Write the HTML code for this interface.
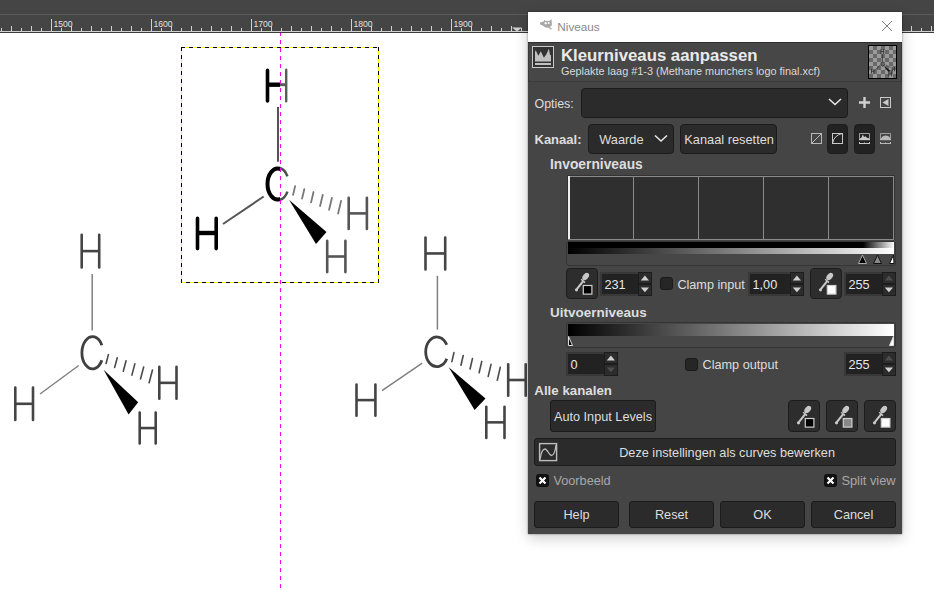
<!DOCTYPE html><html><head><meta charset="utf-8"><style>body{margin:0;width:934px;height:591px;overflow:hidden;position:relative;background:#fff}</style></head><body>
<svg width="934" height="558" viewBox="0 33 934 558" style="position:absolute;left:0;top:33px"><defs><filter id="bl" x="-10%" y="-10%" width="120%" height="120%"><feGaussianBlur stdDeviation="0.75"/></filter><clipPath id="lft"><rect x="0" y="0" width="280" height="600"/></clipPath><clipPath id="rgt"><rect x="280" y="0" width="700" height="600"/></clipPath></defs><rect x="0" y="33" width="934" height="558" fill="#fff"/><g filter="url(#bl)"><path d="M81.7 234.8 V267.4 M99.2 234.8 V267.4" stroke="#444" stroke-width="2.6" stroke-linecap="round" fill="none"/><path d="M81.7 251.1 H99.2" stroke="#444" stroke-width="2.6" fill="none"/><path d="M92.2 274 L92.2 330.5" stroke="#808080" stroke-width="1.5" fill="none"/><path d="M101.86 345.17 A10.60 16.15 0 1 0 101.86 360.33" stroke="#404040" stroke-width="2.8" stroke-linecap="butt" fill="none"/><path d="M15.3 387.6 V420.0 M33.0 387.6 V420.0" stroke="#444" stroke-width="2.6" stroke-linecap="round" fill="none"/><path d="M15.3 403.8 H33.0" stroke="#444" stroke-width="2.6" fill="none"/><path d="M40 394 L78.7 365.5" stroke="#808080" stroke-width="1.5" fill="none"/><path d="M108.42 354.65 L106.08 363.55 M117.24 357.73 L114.68 367.39 M126.05 360.80 L123.29 371.24 M134.86 363.87 L131.90 375.09 M143.67 366.95 L140.51 378.93 M152.48 370.02 L149.12 382.78" stroke="#4a4a4a" stroke-width="1.6" stroke-linecap="round" fill="none"/><path d="M103.6 369.7 L138.2 402.2 L128.6 414.4 Z" fill="#000"/><path d="M159.3 366.90000000000003 V398.8 M176.5 366.90000000000003 V398.8" stroke="#444" stroke-width="2.6" stroke-linecap="round" fill="none"/><path d="M159.3 382.85 H176.5" stroke="#444" stroke-width="2.6" fill="none"/><path d="M139.70000000000002 412.6 V443.5 M155.7 412.6 V443.5" stroke="#444" stroke-width="2.6" stroke-linecap="round" fill="none"/><path d="M139.70000000000002 428.05 H155.7" stroke="#444" stroke-width="2.6" fill="none"/></g><g filter="url(#bl)"><path d="M425.5 237.5 V269.4 M445.2 237.5 V269.4" stroke="#444" stroke-width="2.6" stroke-linecap="round" fill="none"/><path d="M425.5 253.45 H445.2" stroke="#444" stroke-width="2.6" fill="none"/><path d="M437.4 275.8 L437.4 329.6" stroke="#808080" stroke-width="1.5" fill="none"/><path d="M446.79 344.85 A11.20 14.80 0 1 0 446.79 358.75" stroke="#404040" stroke-width="2.8" stroke-linecap="butt" fill="none"/><path d="M356.5 384.5 V415.7 M375.4 384.5 V415.7" stroke="#444" stroke-width="2.6" stroke-linecap="round" fill="none"/><path d="M356.5 400.1 H375.4" stroke="#444" stroke-width="2.6" fill="none"/><path d="M382 390.6 L422.2 363.1" stroke="#808080" stroke-width="1.5" fill="none"/><path d="M453.94 352.62 L451.86 361.58 M463.21 355.55 L460.95 365.29 M472.48 358.48 L470.04 369.00 M481.75 361.41 L479.13 372.71 M491.02 364.34 L488.22 376.42 M500.29 367.27 L497.31 380.13" stroke="#4a4a4a" stroke-width="1.6" stroke-linecap="round" fill="none"/><path d="M448.7 367.3 L485.5 398.5 L474.6 410.1 Z" fill="#000"/><path d="M508.2 364.3 V395.7 M525.7 364.3 V395.7" stroke="#444" stroke-width="2.6" stroke-linecap="round" fill="none"/><path d="M508.2 380.0 H525.7" stroke="#444" stroke-width="2.6" fill="none"/><path d="M486.3 406.7 V438.0 M504.5 406.7 V438.0" stroke="#444" stroke-width="2.6" stroke-linecap="round" fill="none"/><path d="M486.3 422.35 H504.5" stroke="#444" stroke-width="2.6" fill="none"/></g><g filter="url(#bl)"><path d="M278 107 L278 161.7" stroke="#555" stroke-width="2" fill="none"/><path d="M223 224 L263.7 196.5" stroke="#555" stroke-width="2" fill="none"/><path d="M295.13 186.12 L293.07 194.88 M304.33 189.07 L302.07 198.61 M313.52 192.02 L311.08 202.34 M322.71 194.97 L320.09 206.07 M331.90 197.92 L329.10 209.80 M341.09 200.87 L338.11 213.53" stroke="#777" stroke-width="1.8" stroke-linecap="round" fill="none"/><path d="M289 199.8 L326.5 232 L316 244 Z" fill="#000"/><g clip-path="url(#lft)"><path d="M267.5 70.39999999999999 V101.0 M285.59999999999997 70.39999999999999 V101.0" stroke="#000" stroke-width="3.6" stroke-linecap="round" fill="none"/><path d="M267.5 84.7 H285.59999999999997" stroke="#000" stroke-width="4.4" fill="none"/><path d="M286.80 176.72 A10.25 15.50 0 1 0 286.80 191.28" stroke="#000" stroke-width="4" stroke-linecap="round" fill="none"/></g><path d="M197.5 218.4 V248.6 M216.2 218.4 V248.6" stroke="#000" stroke-width="3.6" stroke-linecap="round" fill="none"/><path d="M197.5 233 H216.2" stroke="#000" stroke-width="4.4" fill="none"/><g clip-path="url(#rgt)"><path d="M266.9 69.8 V101.3 M286.2 69.8 V101.3" stroke="#5c5c5c" stroke-width="2.4" stroke-linecap="round" fill="none"/><path d="M266.9 84.7 H286.2" stroke="#5c5c5c" stroke-width="3" fill="none"/><path d="M287.46 176.37 A11.00 16.25 0 1 0 287.46 191.63" stroke="#505050" stroke-width="2.5" stroke-linecap="butt" fill="none"/></g><path d="M348.7 197.8 V229.0 M366.9 197.8 V229.0" stroke="#555" stroke-width="2.6" stroke-linecap="round" fill="none"/><path d="M348.7 213.4 H366.9" stroke="#555" stroke-width="2.6" fill="none"/><path d="M327.2 240.9 V272.09999999999997 M345.4 240.9 V272.09999999999997" stroke="#555" stroke-width="2.6" stroke-linecap="round" fill="none"/><path d="M327.2 256.5 H345.4" stroke="#555" stroke-width="2.6" fill="none"/></g><g shape-rendering="crispEdges"><rect x="181" y="47" width="198" height="1" fill="#ffff00"/><rect x="181" y="282" width="198" height="1" fill="#ffff00"/><rect x="181" y="47" width="1" height="236" fill="#ffff00"/><rect x="378" y="47" width="1" height="236" fill="#ffff00"/><path fill="#000" d="M181 47h1v1h-1zM181 282h1v1h-1zM182 47h1v1h-1zM183 47h1v1h-1zM184 47h1v1h-1zM186 282h1v1h-1zM187 282h1v1h-1zM188 282h1v1h-1zM189 47h1v1h-1zM189 282h1v1h-1zM190 47h1v1h-1zM191 47h1v1h-1zM192 47h1v1h-1zM194 282h1v1h-1zM195 282h1v1h-1zM196 282h1v1h-1zM197 47h1v1h-1zM197 282h1v1h-1zM198 47h1v1h-1zM199 47h1v1h-1zM200 47h1v1h-1zM202 282h1v1h-1zM203 282h1v1h-1zM204 282h1v1h-1zM205 47h1v1h-1zM205 282h1v1h-1zM206 47h1v1h-1zM207 47h1v1h-1zM208 47h1v1h-1zM210 282h1v1h-1zM211 282h1v1h-1zM212 282h1v1h-1zM213 47h1v1h-1zM213 282h1v1h-1zM214 47h1v1h-1zM215 47h1v1h-1zM216 47h1v1h-1zM218 282h1v1h-1zM219 282h1v1h-1zM220 282h1v1h-1zM221 47h1v1h-1zM221 282h1v1h-1zM222 47h1v1h-1zM223 47h1v1h-1zM224 47h1v1h-1zM226 282h1v1h-1zM227 282h1v1h-1zM228 282h1v1h-1zM229 47h1v1h-1zM229 282h1v1h-1zM230 47h1v1h-1zM231 47h1v1h-1zM232 47h1v1h-1zM234 282h1v1h-1zM235 282h1v1h-1zM236 282h1v1h-1zM237 47h1v1h-1zM237 282h1v1h-1zM238 47h1v1h-1zM239 47h1v1h-1zM240 47h1v1h-1zM242 282h1v1h-1zM243 282h1v1h-1zM244 282h1v1h-1zM245 47h1v1h-1zM245 282h1v1h-1zM246 47h1v1h-1zM247 47h1v1h-1zM248 47h1v1h-1zM250 282h1v1h-1zM251 282h1v1h-1zM252 282h1v1h-1zM253 47h1v1h-1zM253 282h1v1h-1zM254 47h1v1h-1zM255 47h1v1h-1zM256 47h1v1h-1zM258 282h1v1h-1zM259 282h1v1h-1zM260 282h1v1h-1zM261 47h1v1h-1zM261 282h1v1h-1zM262 47h1v1h-1zM263 47h1v1h-1zM264 47h1v1h-1zM266 282h1v1h-1zM267 282h1v1h-1zM268 282h1v1h-1zM269 47h1v1h-1zM269 282h1v1h-1zM270 47h1v1h-1zM271 47h1v1h-1zM272 47h1v1h-1zM274 282h1v1h-1zM275 282h1v1h-1zM276 282h1v1h-1zM277 47h1v1h-1zM277 282h1v1h-1zM278 47h1v1h-1zM279 47h1v1h-1zM280 47h1v1h-1zM282 282h1v1h-1zM283 282h1v1h-1zM284 282h1v1h-1zM285 47h1v1h-1zM285 282h1v1h-1zM286 47h1v1h-1zM287 47h1v1h-1zM288 47h1v1h-1zM290 282h1v1h-1zM291 282h1v1h-1zM292 282h1v1h-1zM293 47h1v1h-1zM293 282h1v1h-1zM294 47h1v1h-1zM295 47h1v1h-1zM296 47h1v1h-1zM298 282h1v1h-1zM299 282h1v1h-1zM300 282h1v1h-1zM301 47h1v1h-1zM301 282h1v1h-1zM302 47h1v1h-1zM303 47h1v1h-1zM304 47h1v1h-1zM306 282h1v1h-1zM307 282h1v1h-1zM308 282h1v1h-1zM309 47h1v1h-1zM309 282h1v1h-1zM310 47h1v1h-1zM311 47h1v1h-1zM312 47h1v1h-1zM314 282h1v1h-1zM315 282h1v1h-1zM316 282h1v1h-1zM317 47h1v1h-1zM317 282h1v1h-1zM318 47h1v1h-1zM319 47h1v1h-1zM320 47h1v1h-1zM322 282h1v1h-1zM323 282h1v1h-1zM324 282h1v1h-1zM325 47h1v1h-1zM325 282h1v1h-1zM326 47h1v1h-1zM327 47h1v1h-1zM328 47h1v1h-1zM330 282h1v1h-1zM331 282h1v1h-1zM332 282h1v1h-1zM333 47h1v1h-1zM333 282h1v1h-1zM334 47h1v1h-1zM335 47h1v1h-1zM336 47h1v1h-1zM338 282h1v1h-1zM339 282h1v1h-1zM340 282h1v1h-1zM341 47h1v1h-1zM341 282h1v1h-1zM342 47h1v1h-1zM343 47h1v1h-1zM344 47h1v1h-1zM346 282h1v1h-1zM347 282h1v1h-1zM348 282h1v1h-1zM349 47h1v1h-1zM349 282h1v1h-1zM350 47h1v1h-1zM351 47h1v1h-1zM352 47h1v1h-1zM354 282h1v1h-1zM355 282h1v1h-1zM356 282h1v1h-1zM357 47h1v1h-1zM357 282h1v1h-1zM358 47h1v1h-1zM359 47h1v1h-1zM360 47h1v1h-1zM362 282h1v1h-1zM363 282h1v1h-1zM364 282h1v1h-1zM365 47h1v1h-1zM365 282h1v1h-1zM366 47h1v1h-1zM367 47h1v1h-1zM368 47h1v1h-1zM370 282h1v1h-1zM371 282h1v1h-1zM372 282h1v1h-1zM373 47h1v1h-1zM373 282h1v1h-1zM374 47h1v1h-1zM375 47h1v1h-1zM376 47h1v1h-1zM378 282h1v1h-1zM181 47h1v1h-1zM378 47h1v1h-1zM181 48h1v1h-1zM378 48h1v1h-1zM181 49h1v1h-1zM378 49h1v1h-1zM181 50h1v1h-1zM378 50h1v1h-1zM181 55h1v1h-1zM378 55h1v1h-1zM181 56h1v1h-1zM378 56h1v1h-1zM181 57h1v1h-1zM378 57h1v1h-1zM181 58h1v1h-1zM378 58h1v1h-1zM181 63h1v1h-1zM378 63h1v1h-1zM181 64h1v1h-1zM378 64h1v1h-1zM181 65h1v1h-1zM378 65h1v1h-1zM181 66h1v1h-1zM378 66h1v1h-1zM181 71h1v1h-1zM378 71h1v1h-1zM181 72h1v1h-1zM378 72h1v1h-1zM181 73h1v1h-1zM378 73h1v1h-1zM181 74h1v1h-1zM378 74h1v1h-1zM181 79h1v1h-1zM378 79h1v1h-1zM181 80h1v1h-1zM378 80h1v1h-1zM181 81h1v1h-1zM378 81h1v1h-1zM181 82h1v1h-1zM378 82h1v1h-1zM181 87h1v1h-1zM378 87h1v1h-1zM181 88h1v1h-1zM378 88h1v1h-1zM181 89h1v1h-1zM378 89h1v1h-1zM181 90h1v1h-1zM378 90h1v1h-1zM181 95h1v1h-1zM378 95h1v1h-1zM181 96h1v1h-1zM378 96h1v1h-1zM181 97h1v1h-1zM378 97h1v1h-1zM181 98h1v1h-1zM378 98h1v1h-1zM181 103h1v1h-1zM378 103h1v1h-1zM181 104h1v1h-1zM378 104h1v1h-1zM181 105h1v1h-1zM378 105h1v1h-1zM181 106h1v1h-1zM378 106h1v1h-1zM181 111h1v1h-1zM378 111h1v1h-1zM181 112h1v1h-1zM378 112h1v1h-1zM181 113h1v1h-1zM378 113h1v1h-1zM181 114h1v1h-1zM378 114h1v1h-1zM181 119h1v1h-1zM378 119h1v1h-1zM181 120h1v1h-1zM378 120h1v1h-1zM181 121h1v1h-1zM378 121h1v1h-1zM181 122h1v1h-1zM378 122h1v1h-1zM181 127h1v1h-1zM378 127h1v1h-1zM181 128h1v1h-1zM378 128h1v1h-1zM181 129h1v1h-1zM378 129h1v1h-1zM181 130h1v1h-1zM378 130h1v1h-1zM181 135h1v1h-1zM378 135h1v1h-1zM181 136h1v1h-1zM378 136h1v1h-1zM181 137h1v1h-1zM378 137h1v1h-1zM181 138h1v1h-1zM378 138h1v1h-1zM181 143h1v1h-1zM378 143h1v1h-1zM181 144h1v1h-1zM378 144h1v1h-1zM181 145h1v1h-1zM378 145h1v1h-1zM181 146h1v1h-1zM378 146h1v1h-1zM181 151h1v1h-1zM378 151h1v1h-1zM181 152h1v1h-1zM378 152h1v1h-1zM181 153h1v1h-1zM378 153h1v1h-1zM181 154h1v1h-1zM378 154h1v1h-1zM181 159h1v1h-1zM378 159h1v1h-1zM181 160h1v1h-1zM378 160h1v1h-1zM181 161h1v1h-1zM378 161h1v1h-1zM181 162h1v1h-1zM378 162h1v1h-1zM181 167h1v1h-1zM378 167h1v1h-1zM181 168h1v1h-1zM378 168h1v1h-1zM181 169h1v1h-1zM378 169h1v1h-1zM181 170h1v1h-1zM378 170h1v1h-1zM181 175h1v1h-1zM378 175h1v1h-1zM181 176h1v1h-1zM378 176h1v1h-1zM181 177h1v1h-1zM378 177h1v1h-1zM181 178h1v1h-1zM378 178h1v1h-1zM181 183h1v1h-1zM378 183h1v1h-1zM181 184h1v1h-1zM378 184h1v1h-1zM181 185h1v1h-1zM378 185h1v1h-1zM181 186h1v1h-1zM378 186h1v1h-1zM181 191h1v1h-1zM378 191h1v1h-1zM181 192h1v1h-1zM378 192h1v1h-1zM181 193h1v1h-1zM378 193h1v1h-1zM181 194h1v1h-1zM378 194h1v1h-1zM181 199h1v1h-1zM378 199h1v1h-1zM181 200h1v1h-1zM378 200h1v1h-1zM181 201h1v1h-1zM378 201h1v1h-1zM181 202h1v1h-1zM378 202h1v1h-1zM181 207h1v1h-1zM378 207h1v1h-1zM181 208h1v1h-1zM378 208h1v1h-1zM181 209h1v1h-1zM378 209h1v1h-1zM181 210h1v1h-1zM378 210h1v1h-1zM181 215h1v1h-1zM378 215h1v1h-1zM181 216h1v1h-1zM378 216h1v1h-1zM181 217h1v1h-1zM378 217h1v1h-1zM181 218h1v1h-1zM378 218h1v1h-1zM181 223h1v1h-1zM378 223h1v1h-1zM181 224h1v1h-1zM378 224h1v1h-1zM181 225h1v1h-1zM378 225h1v1h-1zM181 226h1v1h-1zM378 226h1v1h-1zM181 231h1v1h-1zM378 231h1v1h-1zM181 232h1v1h-1zM378 232h1v1h-1zM181 233h1v1h-1zM378 233h1v1h-1zM181 234h1v1h-1zM378 234h1v1h-1zM181 239h1v1h-1zM378 239h1v1h-1zM181 240h1v1h-1zM378 240h1v1h-1zM181 241h1v1h-1zM378 241h1v1h-1zM181 242h1v1h-1zM378 242h1v1h-1zM181 247h1v1h-1zM378 247h1v1h-1zM181 248h1v1h-1zM378 248h1v1h-1zM181 249h1v1h-1zM378 249h1v1h-1zM181 250h1v1h-1zM378 250h1v1h-1zM181 255h1v1h-1zM378 255h1v1h-1zM181 256h1v1h-1zM378 256h1v1h-1zM181 257h1v1h-1zM378 257h1v1h-1zM181 258h1v1h-1zM378 258h1v1h-1zM181 263h1v1h-1zM378 263h1v1h-1zM181 264h1v1h-1zM378 264h1v1h-1zM181 265h1v1h-1zM378 265h1v1h-1zM181 266h1v1h-1zM378 266h1v1h-1zM181 271h1v1h-1zM378 271h1v1h-1zM181 272h1v1h-1zM378 272h1v1h-1zM181 273h1v1h-1zM378 273h1v1h-1zM181 274h1v1h-1zM378 274h1v1h-1zM181 279h1v1h-1zM378 279h1v1h-1zM181 280h1v1h-1zM378 280h1v1h-1zM181 281h1v1h-1zM378 281h1v1h-1zM181 282h1v1h-1zM378 282h1v1h-1z"/><path fill="#ff00ff" d="M280 40h1v4h-1zM280 48h1v4h-1zM280 56h1v4h-1zM280 64h1v4h-1zM280 72h1v4h-1zM280 80h1v4h-1zM280 88h1v4h-1zM280 96h1v4h-1zM280 104h1v4h-1zM280 112h1v4h-1zM280 120h1v4h-1zM280 128h1v4h-1zM280 136h1v4h-1zM280 144h1v4h-1zM280 152h1v4h-1zM280 160h1v4h-1zM280 168h1v4h-1zM280 176h1v4h-1zM280 184h1v4h-1zM280 192h1v4h-1zM280 200h1v4h-1zM280 208h1v4h-1zM280 216h1v4h-1zM280 224h1v4h-1zM280 232h1v4h-1zM280 240h1v4h-1zM280 248h1v4h-1zM280 256h1v4h-1zM280 264h1v4h-1zM280 272h1v4h-1zM280 280h1v4h-1zM280 288h1v4h-1zM280 296h1v4h-1zM280 304h1v4h-1zM280 312h1v4h-1zM280 320h1v4h-1zM280 328h1v4h-1zM280 336h1v4h-1zM280 344h1v4h-1zM280 352h1v4h-1zM280 360h1v4h-1zM280 368h1v4h-1zM280 376h1v4h-1zM280 384h1v4h-1zM280 392h1v4h-1zM280 400h1v4h-1zM280 408h1v4h-1zM280 416h1v4h-1zM280 424h1v4h-1zM280 432h1v4h-1zM280 440h1v4h-1zM280 448h1v4h-1zM280 456h1v4h-1zM280 464h1v4h-1zM280 472h1v4h-1zM280 480h1v4h-1zM280 488h1v4h-1zM280 496h1v4h-1zM280 504h1v4h-1zM280 512h1v4h-1zM280 520h1v4h-1zM280 528h1v4h-1zM280 536h1v4h-1zM280 544h1v4h-1zM280 552h1v4h-1zM280 560h1v4h-1zM280 568h1v4h-1zM280 576h1v4h-1zM280 584h1v4h-1zM280 33h1v3h-1z"/><rect x="280" y="47" width="1" height="1" fill="#000"/></g></svg>
<svg width="934" height="33" style="position:absolute;left:0;top:0"><rect x="0" y="0" width="934" height="33" fill="#454545"/><rect x="0" y="14" width="934" height="1" fill="#5b5b5b"/><rect x="0" y="31" width="934" height="1" fill="#d2d2d2"/><rect x="0" y="32" width="934" height="1" fill="#3a3a3a"/><rect x="1" y="28" width="1" height="3" fill="#d2d2d2"/><rect x="11" y="26" width="1" height="5" fill="#d2d2d2"/><rect x="21" y="28" width="1" height="3" fill="#d2d2d2"/><rect x="31" y="26" width="1" height="5" fill="#d2d2d2"/><rect x="41" y="28" width="1" height="3" fill="#d2d2d2"/><rect x="51" y="19" width="1" height="12" fill="#d2d2d2"/><text transform="translate(53.4 26.8) scale(0.88 1)" font-family="Liberation Sans" font-size="9.8" fill="#e0e0e0">1500</text><rect x="61" y="28" width="1" height="3" fill="#d2d2d2"/><rect x="71" y="26" width="1" height="5" fill="#d2d2d2"/><rect x="81" y="28" width="1" height="3" fill="#d2d2d2"/><rect x="91" y="26" width="1" height="5" fill="#d2d2d2"/><rect x="101" y="28" width="1" height="3" fill="#d2d2d2"/><rect x="111" y="26" width="1" height="5" fill="#d2d2d2"/><rect x="121" y="28" width="1" height="3" fill="#d2d2d2"/><rect x="131" y="26" width="1" height="5" fill="#d2d2d2"/><rect x="141" y="28" width="1" height="3" fill="#d2d2d2"/><rect x="151" y="19" width="1" height="12" fill="#d2d2d2"/><text transform="translate(153.4 26.8) scale(0.88 1)" font-family="Liberation Sans" font-size="9.8" fill="#e0e0e0">1600</text><rect x="161" y="28" width="1" height="3" fill="#d2d2d2"/><rect x="171" y="26" width="1" height="5" fill="#d2d2d2"/><rect x="181" y="28" width="1" height="3" fill="#d2d2d2"/><rect x="191" y="26" width="1" height="5" fill="#d2d2d2"/><rect x="201" y="28" width="1" height="3" fill="#d2d2d2"/><rect x="211" y="26" width="1" height="5" fill="#d2d2d2"/><rect x="221" y="28" width="1" height="3" fill="#d2d2d2"/><rect x="231" y="26" width="1" height="5" fill="#d2d2d2"/><rect x="241" y="28" width="1" height="3" fill="#d2d2d2"/><rect x="251" y="19" width="1" height="12" fill="#d2d2d2"/><text transform="translate(253.4 26.8) scale(0.88 1)" font-family="Liberation Sans" font-size="9.8" fill="#e0e0e0">1700</text><rect x="261" y="28" width="1" height="3" fill="#d2d2d2"/><rect x="271" y="26" width="1" height="5" fill="#d2d2d2"/><rect x="281" y="28" width="1" height="3" fill="#d2d2d2"/><rect x="291" y="26" width="1" height="5" fill="#d2d2d2"/><rect x="301" y="28" width="1" height="3" fill="#d2d2d2"/><rect x="311" y="26" width="1" height="5" fill="#d2d2d2"/><rect x="321" y="28" width="1" height="3" fill="#d2d2d2"/><rect x="331" y="26" width="1" height="5" fill="#d2d2d2"/><rect x="341" y="28" width="1" height="3" fill="#d2d2d2"/><rect x="351" y="19" width="1" height="12" fill="#d2d2d2"/><text transform="translate(353.4 26.8) scale(0.88 1)" font-family="Liberation Sans" font-size="9.8" fill="#e0e0e0">1800</text><rect x="361" y="28" width="1" height="3" fill="#d2d2d2"/><rect x="371" y="26" width="1" height="5" fill="#d2d2d2"/><rect x="381" y="28" width="1" height="3" fill="#d2d2d2"/><rect x="391" y="26" width="1" height="5" fill="#d2d2d2"/><rect x="401" y="28" width="1" height="3" fill="#d2d2d2"/><rect x="411" y="26" width="1" height="5" fill="#d2d2d2"/><rect x="421" y="28" width="1" height="3" fill="#d2d2d2"/><rect x="431" y="26" width="1" height="5" fill="#d2d2d2"/><rect x="441" y="28" width="1" height="3" fill="#d2d2d2"/><rect x="451" y="19" width="1" height="12" fill="#d2d2d2"/><text transform="translate(453.4 26.8) scale(0.88 1)" font-family="Liberation Sans" font-size="9.8" fill="#e0e0e0">1900</text><rect x="461" y="28" width="1" height="3" fill="#d2d2d2"/><rect x="471" y="26" width="1" height="5" fill="#d2d2d2"/><rect x="481" y="28" width="1" height="3" fill="#d2d2d2"/><rect x="491" y="26" width="1" height="5" fill="#d2d2d2"/><rect x="501" y="28" width="1" height="3" fill="#d2d2d2"/><rect x="511" y="26" width="1" height="5" fill="#d2d2d2"/><rect x="521" y="28" width="1" height="3" fill="#d2d2d2"/><rect x="531" y="26" width="1" height="5" fill="#d2d2d2"/><rect x="541" y="28" width="1" height="3" fill="#d2d2d2"/><rect x="551" y="19" width="1" height="12" fill="#d2d2d2"/><text transform="translate(553.4 26.8) scale(0.88 1)" font-family="Liberation Sans" font-size="9.8" fill="#e0e0e0">2000</text><rect x="561" y="28" width="1" height="3" fill="#d2d2d2"/><rect x="571" y="26" width="1" height="5" fill="#d2d2d2"/><rect x="581" y="28" width="1" height="3" fill="#d2d2d2"/><rect x="591" y="26" width="1" height="5" fill="#d2d2d2"/><rect x="601" y="28" width="1" height="3" fill="#d2d2d2"/><rect x="611" y="26" width="1" height="5" fill="#d2d2d2"/><rect x="621" y="28" width="1" height="3" fill="#d2d2d2"/><rect x="631" y="26" width="1" height="5" fill="#d2d2d2"/><rect x="641" y="28" width="1" height="3" fill="#d2d2d2"/><rect x="651" y="19" width="1" height="12" fill="#d2d2d2"/><text transform="translate(653.4 26.8) scale(0.88 1)" font-family="Liberation Sans" font-size="9.8" fill="#e0e0e0">2100</text><rect x="661" y="28" width="1" height="3" fill="#d2d2d2"/><rect x="671" y="26" width="1" height="5" fill="#d2d2d2"/><rect x="681" y="28" width="1" height="3" fill="#d2d2d2"/><rect x="691" y="26" width="1" height="5" fill="#d2d2d2"/><rect x="701" y="28" width="1" height="3" fill="#d2d2d2"/><rect x="711" y="26" width="1" height="5" fill="#d2d2d2"/><rect x="721" y="28" width="1" height="3" fill="#d2d2d2"/><rect x="731" y="26" width="1" height="5" fill="#d2d2d2"/><rect x="741" y="28" width="1" height="3" fill="#d2d2d2"/><rect x="751" y="19" width="1" height="12" fill="#d2d2d2"/><text transform="translate(753.4 26.8) scale(0.88 1)" font-family="Liberation Sans" font-size="9.8" fill="#e0e0e0">2200</text><rect x="761" y="28" width="1" height="3" fill="#d2d2d2"/><rect x="771" y="26" width="1" height="5" fill="#d2d2d2"/><rect x="781" y="28" width="1" height="3" fill="#d2d2d2"/><rect x="791" y="26" width="1" height="5" fill="#d2d2d2"/><rect x="801" y="28" width="1" height="3" fill="#d2d2d2"/><rect x="811" y="26" width="1" height="5" fill="#d2d2d2"/><rect x="821" y="28" width="1" height="3" fill="#d2d2d2"/><rect x="831" y="26" width="1" height="5" fill="#d2d2d2"/><rect x="841" y="28" width="1" height="3" fill="#d2d2d2"/><rect x="851" y="19" width="1" height="12" fill="#d2d2d2"/><text transform="translate(853.4 26.8) scale(0.88 1)" font-family="Liberation Sans" font-size="9.8" fill="#e0e0e0">2300</text><rect x="861" y="28" width="1" height="3" fill="#d2d2d2"/><rect x="871" y="26" width="1" height="5" fill="#d2d2d2"/><rect x="881" y="28" width="1" height="3" fill="#d2d2d2"/><rect x="891" y="26" width="1" height="5" fill="#d2d2d2"/><rect x="901" y="28" width="1" height="3" fill="#d2d2d2"/><rect x="911" y="26" width="1" height="5" fill="#d2d2d2"/><rect x="921" y="28" width="1" height="3" fill="#d2d2d2"/><rect x="931" y="26" width="1" height="5" fill="#d2d2d2"/><path d="M512 27.5 L522 27.5 L517 31.5 Z" fill="#d2d2d2"/></svg>
<div style="position:absolute;left:528px;top:12px;width:374px;height:522px;box-shadow:0 0 2px 0 rgba(0,0,0,0.45),0 4px 13px 0 rgba(0,0,0,0.2);background:#454545"></div>
<div style="position:absolute;left:528px;top:12px;width:374px;height:30px;background:#fff"></div>
<svg width="12" height="12" style="position:absolute;left:881px;top:20px"><path d="M1 1 L11 11 M11 1 L1 11" stroke="#7c7c7c" stroke-width="1" fill="none"/></svg>
<svg width="20" height="18" style="position:absolute;left:536px;top:16px"><g transform="translate(-536 -16)"><path d="M540 22.6 L543.6 21.4 L544.2 19.8 L545.6 21 L549.8 20.8 L551.6 19 L551.9 25.6 L549.6 27 L551.8 28.6 L551.2 29.8 L548.4 27.8 L545.6 27.6 L542.4 25.6 L540.2 24.6 Z" fill="#a8a8a8"/><ellipse cx="545.6" cy="23.2" rx="1" ry="1.2" fill="#fff"/><ellipse cx="548.6" cy="23" rx="1" ry="1.1" fill="#fff"/></g></svg>
<div style="position:absolute;left:528px;top:42px;width:374px;height:1px;background:#2e2e2e"></div>
<div style="position:absolute;left:528px;top:43px;width:374px;height:38px;background:#474747;border-left:1px solid #3a3a3a;border-right:1px solid #3a3a3a;box-sizing:border-box"></div>
<div style="position:absolute;left:528px;top:81px;width:374px;height:1px;background:#3a3a3a"></div>
<svg width="24" height="24" style="position:absolute;left:531px;top:45px"><rect x="1.5" y="1.5" width="21" height="21" fill="#333" stroke="#c8c8c8" stroke-width="1"/><path d="M4 16.4 L4 7 L4.7 5.2 L7.3 10.8 L9.8 6.2 L12.9 12.8 L15.4 9.3 L17.9 3.7 L19 9.8 L20 10.3 L20 16.4 Z" fill="#c0c0c0"/><rect x="4" y="18" width="16" height="2" fill="#c0c0c0"/></svg>
<div style="position:absolute;left:868px;top:45px;width:29px;height:34px;background:#000"></div>
<div style="position:absolute;left:869px;top:46px;width:27px;height:32px;background-color:#9a9a9a;background-image:linear-gradient(45deg,#686868 25%,transparent 25%,transparent 75%,#686868 75%),linear-gradient(45deg,#686868 25%,transparent 25%,transparent 75%,#686868 75%);background-size:8px 8px;background-position:0 0,4px 4px"></div>
<svg width="29" height="34" style="position:absolute;left:868px;top:45px"><g stroke="#333" fill="none" stroke-width="0.9" filter="blur(0.25px)"><path d="M13 4 V9 M15.6 4 V9 M13 6.5 H15.6"/><path d="M14.3 9.5 V16.5"/><path d="M15.8 17.5 A1.6 2.2 0 1 0 15.8 20.5"/><path d="M3.5 24 V28.5 M6 24 V28.5 M3.5 26.2 H6"/><path d="M6.8 25.5 L12.5 20"/><path d="M16.5 19.5 L23 22.5" stroke-dasharray="0.8 0.8"/><path d="M24.2 21.8 V26.3 M26.5 21.8 V26.3 M24.2 24 H26.5"/><path d="M20.8 26.5 V31.5 M23.5 26.5 V31.5 M20.8 29 H23.5"/></g><path d="M15.5 20.5 L22 25.5 L20.5 27 Z" fill="#111"/></svg>
<div style="position:absolute;left:581px;top:88px;width:267px;height:30px;background:#2b2b2b;border:1px solid #1b1b1b;border-radius:4px;box-sizing:border-box"></div>
<svg width="14" height="8" style="position:absolute;left:828px;top:98px"><path d="M1 1 L7 6.5 L13 1" stroke="#e6e6e6" stroke-width="1.6" fill="none"/></svg>
<svg width="13" height="13" style="position:absolute;left:858px;top:96px"><path d="M6.5 1 V12 M1 6.5 H12" stroke="#d0d0d0" stroke-width="2.4" fill="none"/></svg>
<svg width="13" height="13" style="position:absolute;left:879px;top:96px"><rect x="1.5" y="1.5" width="10" height="10" fill="none" stroke="#c8c8c8" stroke-width="1"/><path d="M3.5 6.5 L9.5 3 L9.5 10 Z" fill="#c8c8c8"/></svg>
<div style="position:absolute;left:588px;top:124px;width:86px;height:30px;background:#2b2b2b;border:1px solid #1b1b1b;border-radius:4px;box-sizing:border-box"></div>
<svg width="14" height="9" style="position:absolute;left:654px;top:134px"><path d="M1 1.5 L7 7 L13 1.5" stroke="#e6e6e6" stroke-width="1.6" fill="none"/></svg>
<div style="position:absolute;left:680px;top:124px;width:97px;height:30px;background:#2b2b2b;border:1px solid #1b1b1b;border-radius:4px;box-sizing:border-box"></div>
<svg width="13" height="13" style="position:absolute;left:810px;top:132px"><rect x="1.5" y="1.5" width="10" height="10" fill="none" stroke="#b8b8b8" stroke-width="1"/><path d="M1.5 11.5 L11.5 1.5" stroke="#b8b8b8" stroke-width="1"/></svg>
<div style="position:absolute;left:827px;top:124px;width:21px;height:30px;background:#222;border:1px solid #1d1d1d;border-radius:4px;box-sizing:border-box"></div>
<svg width="13" height="13" style="position:absolute;left:831px;top:132px"><rect x="1.5" y="1.5" width="10" height="10" fill="none" stroke="#c8c8c8" stroke-width="1"/><path d="M1.5 11.5 Q3 3 11.5 1.5" stroke="#c8c8c8" stroke-width="1" fill="none"/></svg>
<div style="position:absolute;left:854px;top:124px;width:21px;height:30px;background:#222;border:1px solid #1d1d1d;border-radius:4px;box-sizing:border-box"></div>
<svg width="13" height="13" style="position:absolute;left:858px;top:132px"><path d="M1.5 7.5 V1.5 H11.5 V7.5" fill="none" stroke="#c8c8c8" stroke-width="1" opacity="0.75"/><path d="M1 7.6 H12" stroke="#c8c8c8" stroke-width="1.2"/><path d="M2 7.5 L2 6.5 L3.5 5.5 L4.8 2.2 L6 5 L7.5 4.2 L9 5.8 L11 6.2 L11 7.5 Z" fill="#c8c8c8"/><path d="M1 11.5 H12 M1.5 10 V11.5 M6.5 10.5 V11.5 M11.5 10 V11.5" stroke="#c8c8c8" stroke-width="1" fill="none"/></svg>
<svg width="13" height="13" style="position:absolute;left:879px;top:132px"><path d="M1.5 7.5 V1.5 H11.5 V7.5" fill="none" stroke="#b8b8b8" stroke-width="1" opacity="0.75"/><path d="M1 7.6 H12" stroke="#b8b8b8" stroke-width="1.2"/><path d="M2 7.5 L2 6.2 Q3.5 3.6 6.5 3.4 Q9.5 3.4 11 5.6 L11 7.5 Z" fill="#b8b8b8"/><path d="M1 11.5 H12 M1.5 10 V11.5 M6.5 10.5 V11.5 M11.5 10 V11.5" stroke="#b8b8b8" stroke-width="1" fill="none"/></svg>
<div style="position:absolute;left:567px;top:175px;width:328px;height:65px;background:#2f2f2f;border:1px solid #333;box-sizing:border-box"></div>
<svg width="328" height="65" style="position:absolute;left:567px;top:175px"><rect x="1.5" y="1.5" width="325" height="63" fill="none" stroke="#8a8a8a" stroke-width="1"/><path d="M66.5 2 V64 M131.5 2 V64 M196.5 2 V64 M261.5 2 V64" stroke="#8a8a8a" stroke-width="1"/><rect x="1" y="1" width="2" height="63" fill="#f0f0f0"/></svg>
<div style="position:absolute;left:566px;top:241px;width:330px;height:25px;background:#474747;border:1px solid #353535;border-radius:3px;box-sizing:border-box"></div>
<div style="position:absolute;left:568px;top:242px;width:326px;height:6px;background:linear-gradient(90deg,#000 0%,#000 90.5%,#fff 100%)"></div>
<div style="position:absolute;left:568px;top:248px;width:326px;height:6px;background:linear-gradient(90deg,#000,#fff)"></div>
<svg width="340" height="12" style="position:absolute;left:560px;top:254px"><path d="M298.5 9.5 L302.5 1 L306.5 9.5 Z" fill="#000" stroke="#aaa" stroke-width="1"/><path d="M313.5 9.5 L317.5 1 L321.5 9.5 Z" fill="#888" stroke="#111" stroke-width="1"/><path d="M329.5 9.5 L333.5 1 L334 9.5 Z" fill="#fff" stroke="#111" stroke-width="1"/></svg>
<div style="position:absolute;left:566px;top:268px;width:32px;height:31px;background:#2d2d2d;border:1px solid #1c1c1c;border-radius:4px;box-sizing:border-box"></div>
<svg width="32" height="31" style="position:absolute;left:566px;top:268.0px"><g fill="#c8c8c8" stroke="#c8c8c8"><ellipse cx="19.7" cy="8.5" rx="2.7" ry="4.1" transform="rotate(40 19.7 8.5)" stroke="none"/><path d="M15.2 11.2 L19 14.6" stroke-width="1.5" fill="none"/><path d="M17.2 13.2 L10.8 21.2" stroke-width="2.1" fill="none"/><circle cx="10.5" cy="21.8" r="1.6" stroke="none"/></g><rect x="17.3" y="17.5" width="8.6" height="8.6" fill="#000" stroke="#d0d0d0" stroke-width="1.2"/></svg>
<div style="position:absolute;left:600px;top:272px;width:52px;height:24px;background:#383838"></div>
<div style="position:absolute;left:602px;top:274px;width:36px;height:20px;background:#222"></div>
<div style="position:absolute;left:638px;top:272px;width:14px;height:12px;background:#2c2c2c;border:1px solid #1c1c1c;box-sizing:border-box"></div>
<div style="position:absolute;left:638px;top:284px;width:14px;height:12px;background:#2c2c2c;border:1px solid #1c1c1c;box-sizing:border-box"></div>
<svg width="14" height="24" style="position:absolute;left:638px;top:272px"><path d="M2.8 8.6 L6.9 3.6 L11 8.6 Z" fill="#d0d0d0"/><path d="M2.8 15.6 L6.9 20.2 L11 15.6 Z" fill="#d0d0d0"/></svg>
<div style="position:absolute;left:660px;top:277px;width:13px;height:13px;background:#262626;border:1px solid #1a1a1a;border-radius:3px;box-sizing:border-box"></div>
<div style="position:absolute;left:748px;top:272px;width:56px;height:24px;background:#383838"></div>
<div style="position:absolute;left:750px;top:274px;width:40px;height:20px;background:#222"></div>
<div style="position:absolute;left:790px;top:272px;width:14px;height:12px;background:#2c2c2c;border:1px solid #1c1c1c;box-sizing:border-box"></div>
<div style="position:absolute;left:790px;top:284px;width:14px;height:12px;background:#2c2c2c;border:1px solid #1c1c1c;box-sizing:border-box"></div>
<svg width="14" height="24" style="position:absolute;left:790px;top:272px"><path d="M2.8 8.6 L6.9 3.6 L11 8.6 Z" fill="#d0d0d0"/><path d="M2.8 15.6 L6.9 20.2 L11 15.6 Z" fill="#d0d0d0"/></svg>
<div style="position:absolute;left:810px;top:268px;width:32px;height:31px;background:#2d2d2d;border:1px solid #1c1c1c;border-radius:4px;box-sizing:border-box"></div>
<svg width="32" height="31" style="position:absolute;left:810px;top:268.0px"><g fill="#c8c8c8" stroke="#c8c8c8"><ellipse cx="19.7" cy="8.5" rx="2.7" ry="4.1" transform="rotate(40 19.7 8.5)" stroke="none"/><path d="M15.2 11.2 L19 14.6" stroke-width="1.5" fill="none"/><path d="M17.2 13.2 L10.8 21.2" stroke-width="2.1" fill="none"/><circle cx="10.5" cy="21.8" r="1.6" stroke="none"/></g><rect x="17.3" y="17.5" width="8.6" height="8.6" fill="#fff" stroke="#d0d0d0" stroke-width="1.2"/></svg>
<div style="position:absolute;left:844px;top:272px;width:52px;height:24px;background:#383838"></div>
<div style="position:absolute;left:846px;top:274px;width:36px;height:20px;background:#222"></div>
<div style="position:absolute;left:882px;top:272px;width:14px;height:12px;background:#2c2c2c;border:1px solid #1c1c1c;box-sizing:border-box"></div>
<div style="position:absolute;left:882px;top:284px;width:14px;height:12px;background:#2c2c2c;border:1px solid #1c1c1c;box-sizing:border-box"></div>
<svg width="14" height="24" style="position:absolute;left:882px;top:272px"><path d="M2.8 8.6 L6.9 3.6 L11 8.6 Z" fill="#4e4e4e"/><path d="M2.8 15.6 L6.9 20.2 L11 15.6 Z" fill="#d0d0d0"/></svg>
<div style="position:absolute;left:566px;top:322px;width:330px;height:26px;background:#474747;border:1px solid #353535;border-radius:3px;box-sizing:border-box"></div>
<div style="position:absolute;left:568px;top:324px;width:326px;height:12px;background:linear-gradient(90deg,#000,#fff)"></div>
<svg width="340" height="12" style="position:absolute;left:560px;top:335px"><path d="M8.5 10.5 L8.5 1.5 L12.5 10.5 Z" fill="#000" stroke="#ddd" stroke-width="1"/><path d="M333.5 10.5 L333.5 1.5 L329.5 10.5 Z" fill="#fff" stroke="#ddd" stroke-width="1"/></svg>
<div style="position:absolute;left:566px;top:352px;width:52px;height:24px;background:#383838"></div>
<div style="position:absolute;left:568px;top:354px;width:36px;height:20px;background:#222"></div>
<div style="position:absolute;left:604px;top:352px;width:14px;height:12px;background:#2c2c2c;border:1px solid #1c1c1c;box-sizing:border-box"></div>
<div style="position:absolute;left:604px;top:364px;width:14px;height:12px;background:#2c2c2c;border:1px solid #1c1c1c;box-sizing:border-box"></div>
<svg width="14" height="24" style="position:absolute;left:604px;top:352px"><path d="M2.8 8.6 L6.9 3.6 L11 8.6 Z" fill="#d0d0d0"/><path d="M2.8 15.6 L6.9 20.2 L11 15.6 Z" fill="#4e4e4e"/></svg>
<div style="position:absolute;left:685px;top:357.5px;width:13px;height:13.0px;background:#262626;border:1px solid #1a1a1a;border-radius:3px;box-sizing:border-box"></div>
<div style="position:absolute;left:844px;top:352px;width:52px;height:24px;background:#383838"></div>
<div style="position:absolute;left:846px;top:354px;width:36px;height:20px;background:#222"></div>
<div style="position:absolute;left:882px;top:352px;width:14px;height:12px;background:#2c2c2c;border:1px solid #1c1c1c;box-sizing:border-box"></div>
<div style="position:absolute;left:882px;top:364px;width:14px;height:12px;background:#2c2c2c;border:1px solid #1c1c1c;box-sizing:border-box"></div>
<svg width="14" height="24" style="position:absolute;left:882px;top:352px"><path d="M2.8 8.6 L6.9 3.6 L11 8.6 Z" fill="#4e4e4e"/><path d="M2.8 15.6 L6.9 20.2 L11 15.6 Z" fill="#d0d0d0"/></svg>
<div style="position:absolute;left:550px;top:400px;width:106px;height:32px;background:#2b2b2b;border:1px solid #1b1b1b;border-radius:3px;box-sizing:border-box"></div>
<div style="position:absolute;left:788px;top:400px;width:32px;height:32px;background:#2d2d2d;border:1px solid #1c1c1c;border-radius:4px;box-sizing:border-box"></div>
<svg width="32" height="31" style="position:absolute;left:788px;top:400.5px"><g fill="#c8c8c8" stroke="#c8c8c8"><ellipse cx="19.7" cy="8.5" rx="2.7" ry="4.1" transform="rotate(40 19.7 8.5)" stroke="none"/><path d="M15.2 11.2 L19 14.6" stroke-width="1.5" fill="none"/><path d="M17.2 13.2 L10.8 21.2" stroke-width="2.1" fill="none"/><circle cx="10.5" cy="21.8" r="1.6" stroke="none"/></g><rect x="17.3" y="17.5" width="8.6" height="8.6" fill="#000" stroke="#d0d0d0" stroke-width="1.2"/></svg>
<div style="position:absolute;left:826px;top:400px;width:32px;height:32px;background:#2d2d2d;border:1px solid #1c1c1c;border-radius:4px;box-sizing:border-box"></div>
<svg width="32" height="31" style="position:absolute;left:826px;top:400.5px"><g fill="#c8c8c8" stroke="#c8c8c8"><ellipse cx="19.7" cy="8.5" rx="2.7" ry="4.1" transform="rotate(40 19.7 8.5)" stroke="none"/><path d="M15.2 11.2 L19 14.6" stroke-width="1.5" fill="none"/><path d="M17.2 13.2 L10.8 21.2" stroke-width="2.1" fill="none"/><circle cx="10.5" cy="21.8" r="1.6" stroke="none"/></g><rect x="17.3" y="17.5" width="8.6" height="8.6" fill="#888" stroke="#d0d0d0" stroke-width="1.2"/></svg>
<div style="position:absolute;left:864px;top:400px;width:32px;height:32px;background:#2d2d2d;border:1px solid #1c1c1c;border-radius:4px;box-sizing:border-box"></div>
<svg width="32" height="31" style="position:absolute;left:864px;top:400.5px"><g fill="#c8c8c8" stroke="#c8c8c8"><ellipse cx="19.7" cy="8.5" rx="2.7" ry="4.1" transform="rotate(40 19.7 8.5)" stroke="none"/><path d="M15.2 11.2 L19 14.6" stroke-width="1.5" fill="none"/><path d="M17.2 13.2 L10.8 21.2" stroke-width="2.1" fill="none"/><circle cx="10.5" cy="21.8" r="1.6" stroke="none"/></g><rect x="17.3" y="17.5" width="8.6" height="8.6" fill="#fff" stroke="#d0d0d0" stroke-width="1.2"/></svg>
<div style="position:absolute;left:534px;top:438px;width:362px;height:28px;background:#2b2b2b;border:1px solid #1b1b1b;border-radius:3px;box-sizing:border-box"></div>
<svg width="20" height="20" style="position:absolute;left:538px;top:442px"><rect x="1.6" y="1.6" width="17" height="17" fill="none" stroke="#bdbdbd" stroke-width="1.4"/><path d="M2 17.5 C3 11 4.5 7 7 7 C9.5 7 11 13.5 13.5 13.5 C16 13.5 17.5 7 18 3" stroke="#bdbdbd" stroke-width="1.3" fill="none"/></svg>
<div style="position:absolute;left:536px;top:474px;width:13px;height:13px;background:#111;border-radius:3px"></div>
<svg width="13" height="13" style="position:absolute;left:536px;top:474px"><path d="M3.5 3.5 L9.5 9.5 M9.5 3.5 L3.5 9.5" stroke="#fff" stroke-width="2.2"/></svg>
<div style="position:absolute;left:824px;top:474px;width:13px;height:13px;background:#111;border-radius:3px"></div>
<svg width="13" height="13" style="position:absolute;left:824px;top:474px"><path d="M3.5 3.5 L9.5 9.5 M9.5 3.5 L3.5 9.5" stroke="#fff" stroke-width="2.2"/></svg>
<div style="position:absolute;left:534px;top:501px;width:85px;height:27px;background:#2b2b2b;border:1px solid #1b1b1b;border-radius:3px;box-sizing:border-box"></div>
<div style="position:absolute;left:629px;top:501px;width:85px;height:27px;background:#2b2b2b;border:1px solid #1b1b1b;border-radius:3px;box-sizing:border-box"></div>
<div style="position:absolute;left:720px;top:501px;width:85px;height:27px;background:#2b2b2b;border:1px solid #1b1b1b;border-radius:3px;box-sizing:border-box"></div>
<div style="position:absolute;left:811px;top:501px;width:85px;height:27px;background:#2b2b2b;border:1px solid #1b1b1b;border-radius:3px;box-sizing:border-box"></div>
<svg width="934" height="591" style="position:absolute;left:0;top:0" font-family="Liberation Sans"><text x="557.3" y="31.4" font-size="11.75" font-weight="normal" fill="#8a8a8a" text-anchor="start" letter-spacing="0">Niveaus</text><text x="561" y="60.8" font-size="16.75" font-weight="bold" fill="#eaeaea" text-anchor="start" letter-spacing="0">Kleurniveaus aanpassen</text><text x="561" y="74.5" font-size="10.9" font-weight="normal" fill="#dadada" text-anchor="start" letter-spacing="0">Geplakte laag #1-3 (Methane munchers logo final.xcf)</text><text x="534.5" y="107.7" font-size="12.4" font-weight="normal" fill="#dedede" text-anchor="start" letter-spacing="0">Opties:</text><text x="534.5" y="143.6" font-size="13" font-weight="bold" fill="#dedede" text-anchor="start" letter-spacing="0">Kanaal:</text><text x="599.2" y="143.6" font-size="12.8" font-weight="normal" fill="#dedede" text-anchor="start" letter-spacing="0">Waarde</text><text x="684.3" y="143.6" font-size="12.8" font-weight="normal" fill="#dedede" text-anchor="start" letter-spacing="0">Kanaal resetten</text><text x="550" y="168.9" font-size="13.8" font-weight="bold" fill="#dedede" text-anchor="start" letter-spacing="0">Invoerniveaus</text><text x="604.5" y="289" font-size="12.7" font-weight="normal" fill="#e8e8e8" text-anchor="start" letter-spacing="0">231</text><text x="677.4" y="288.9" font-size="12.65" font-weight="normal" fill="#dedede" text-anchor="start" letter-spacing="0">Clamp input</text><text x="752.5" y="289" font-size="12.7" font-weight="normal" fill="#e8e8e8" text-anchor="start" letter-spacing="0">1,00</text><text x="848.5" y="289" font-size="12.7" font-weight="normal" fill="#e8e8e8" text-anchor="start" letter-spacing="0">255</text><text x="550" y="316.8" font-size="13.5" font-weight="bold" fill="#dedede" text-anchor="start" letter-spacing="0">Uitvoerniveaus</text><text x="570.5" y="369" font-size="12.7" font-weight="normal" fill="#e8e8e8" text-anchor="start" letter-spacing="0">0</text><text x="702.5" y="368.8" font-size="12.7" font-weight="normal" fill="#dedede" text-anchor="start" letter-spacing="0">Clamp output</text><text x="848.5" y="369" font-size="12.7" font-weight="normal" fill="#e8e8e8" text-anchor="start" letter-spacing="0">255</text><text x="534.3" y="394.8" font-size="13.3" font-weight="bold" fill="#dedede" text-anchor="start" letter-spacing="0">Alle kanalen</text><text x="603.0" y="420.6" font-size="12.7" font-weight="normal" fill="#dedede" text-anchor="middle" letter-spacing="0">Auto Input Levels</text><text x="619.2" y="456.6" font-size="12.7" font-weight="normal" fill="#dedede" text-anchor="start" letter-spacing="0">Deze instellingen als curves bewerken</text><text x="553.5" y="485.1" font-size="12.7" font-weight="normal" fill="#a8a8a8" text-anchor="start" letter-spacing="0">Voorbeeld</text><text x="841.4" y="485.1" font-size="12.85" font-weight="normal" fill="#a8a8a8" text-anchor="start" letter-spacing="0">Split view</text><text x="576.5" y="519.1" font-size="12.7" font-weight="normal" fill="#dedede" text-anchor="middle" letter-spacing="0">Help</text><text x="671.5" y="519.1" font-size="12.7" font-weight="normal" fill="#dedede" text-anchor="middle" letter-spacing="0">Reset</text><text x="762.5" y="519.1" font-size="12.7" font-weight="normal" fill="#dedede" text-anchor="middle" letter-spacing="0">OK</text><text x="853.5" y="519.1" font-size="12.7" font-weight="normal" fill="#dedede" text-anchor="middle" letter-spacing="0">Cancel</text></svg>
</body></html>
